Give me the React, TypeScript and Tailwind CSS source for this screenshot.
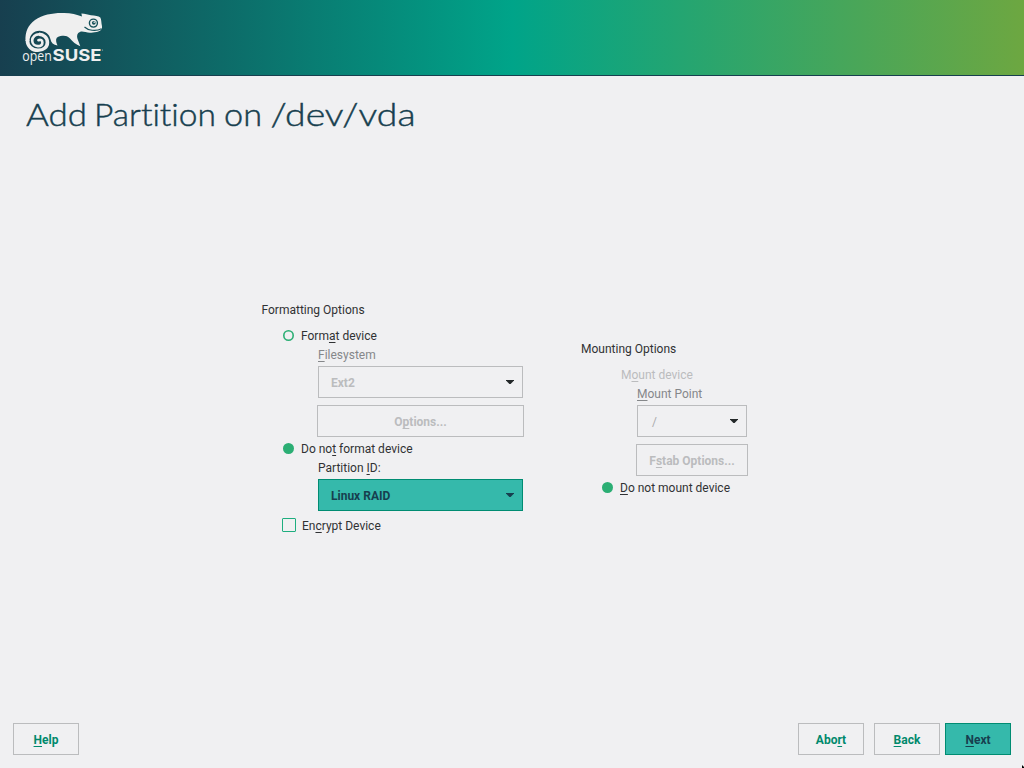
import React from "react";

type MnemonicProps = { text: string; at: number };

function Mnemonic({ text, at }: MnemonicProps) {
  return (
    <span className="whitespace-pre">
      {text.slice(0, at)}
      <span className="underline decoration-1 underline-offset-[2px] [text-decoration-skip-ink:none]">{text[at]}</span>
      {text.slice(at + 1)}
    </span>
  );
}

function Arrow({ color = "#232829" }: { color?: string }) {
  return (
    <svg width="8" height="4" viewBox="0 0 8 4" className="block">
      <path d="M0 0H8V.5L4.6 4H3.4L0 .5Z" fill={color} />
    </svg>
  );
}

function Radio({ checked }: { checked: boolean }) {
  return (
    <svg width="12" height="12" viewBox="0 0 12 12" className="block">
      {checked ? (
        <circle cx="5.5" cy="5.5" r="5.5" fill="#2bae74" />
      ) : (
        <circle cx="5.5" cy="5.5" r="4.7" fill="none" stroke="#2bae74" strokeWidth="1.6" />
      )}
    </svg>
  );
}

function Logo() {
  return (
    <svg width="110" height="75" viewBox="10 0 110 75" className="block">
      <path
        fill="#efefef"
        d="M25.5 41C25 32 28 25 35 20C43 14.5 54 12.7 64 13.1C71 13.3 77 14.7 82 16.5L81.4 13.6C85 13.9 88 15 91 15.3C95 15.7 98.5 16 100.3 17.6C101.5 19.5 101.2 23 102 26.3C102.4 29.5 100 31.6 96.5 32C92 32.6 89 33.2 85.5 32C82 31 80 31.2 78.2 33C76.4 35 77 38 78.3 41C79 43 79.8 44.6 80.3 46.2C76 44.8 72.5 41.8 70 38.6C67 35 63.5 35.5 60.5 36C57 36.7 55.6 38.4 56.2 41.5C56.4 43 57 44 57.5 45.5C53.4 45 51 42.5 50.4 39C49.5 34.5 45.5 30.7 39.5 30.7C33.5 30.7 29.5 35 29.5 41Z"
      />
      <path
        fill="none"
        stroke="#efefef"
        strokeWidth="3.6"
        d="M27.4 40C27.4 46.5 32.2 50.3 38 50.3C43.8 50.3 47.4 46.8 47.4 42.4C47.4 37.5 43.4 34.3 39 34.3"
      />
      <path
        fill="none"
        stroke="#efefef"
        strokeWidth="2.6"
        strokeLinecap="round"
        d="M40 34.4C35.2 33.8 32.2 37.1 32.2 40.6C32.2 44 34.8 46.1 37.9 46.1C40.8 46.1 42.4 44.4 42.4 42.4C42.4 40.4 40.7 39.2 38.4 40.2"
      />
      <circle cx="93.4" cy="23.1" r="4" fill="#efefef" stroke="#145059" strokeWidth="1.4" />
      <circle cx="93.8" cy="22.8" r="1.9" fill="#145059" />
      <ellipse cx="94.4" cy="22.2" rx="1" ry=".6" fill="#efefef" />
      <path d="M84.5 27C88 30.4 95.5 31.7 101.5 28.8" fill="none" stroke="#145059" strokeWidth="1.1" />
      <text fill="#efefef" className="font-['Open_Sans',sans-serif]">
        <tspan x="22.3" y="61" className="text-[14px]" textLength="29.5" lengthAdjust="spacingAndGlyphs">open</tspan>
        <tspan x="52.6" y="61" className="font-['Inter',sans-serif] text-[15.5px] font-bold" textLength="49" lengthAdjust="spacingAndGlyphs">SUSE</tspan>
      </text>
      <circle cx="102.5" cy="50" r=".6" fill="#9ebcbd" />
    </svg>
  );
}

function FooterButton({ label, at, primary = false }: { label: string; at: number; primary?: boolean }) {
  return (
    <button
      className={
        primary
          ? "h-8 w-[66px] border border-[#008c72] bg-[#35b9ab] pt-px font-bold text-[#173f4f]"
          : "h-8 w-[66px] border border-[#bbbcbe] pt-px font-bold text-[#00896c]"
      }
    >
      <Mnemonic text={label} at={at} />
    </button>
  );
}

export default function App() {
  return (
    <div className="relative flex h-[768px] w-[1024px] flex-col overflow-hidden bg-[#f0f0f2] font-[Roboto,sans-serif] text-[12px] leading-[14px] text-[#303234]">
      <header className="h-[76px] shrink-0 border-b border-[#173f4f] bg-[linear-gradient(90deg,#173f4f_0%,#00a489_50%,#6da741_100%)] pl-[10px]">
        <Logo />
      </header>

      <h1 className="h-[74px] pl-[26px] pt-4">
        <svg width="392" height="44" viewBox="0 0 392 44" fill="#173f4f" stroke="#173f4f" strokeWidth=".45" className="block font-[Lato,sans-serif] text-[31.5px] font-light [font-variant-ligatures:none]">
          <text x="0" y="34" textLength="61" lengthAdjust="spacingAndGlyphs">Add</text>
          <text x="68" y="34" textLength="122" lengthAdjust="spacingAndGlyphs">Partition</text>
          <text x="198" y="34" textLength="38" lengthAdjust="spacingAndGlyphs">on</text>
          <text x="244.5" y="34" textLength="145" lengthAdjust="spacingAndGlyphs">/dev/vda</text>
        </svg>
      </h1>

      <main className="flex grow items-start pl-[261px] pt-[153px]">
        <section className="w-[320px]">
          <h2 className="pl-[0.5px]">Formatting Options</h2>
          <div className="mt-3 flex h-[14px] items-center gap-[6px] pl-[22px]">
            <Radio checked={false} />
            <Mnemonic text="Format device" at={4} />
          </div>
          <div className="mt-[5px] pl-[57px] text-[#85878a]">
            <Mnemonic text="Filesystem" at={0} />
          </div>
          <div className="ml-[57px] mt-1 flex h-8 w-[205px] items-center justify-between border border-[#bbbcbe] pl-3 pr-2 font-bold text-[#bbbcbe]">
            <span className="pt-px">Ext2</span><Arrow />
          </div>
          <button className="ml-[56px] mt-[7px] block h-8 w-[207px] border border-[#bbbcbe] pt-px font-bold text-[#bbbcbe]">
            <Mnemonic text="Options..." at={1} />
          </button>
          <div className="mt-[5px] flex h-[14px] items-center gap-[6px] pl-[22px]">
            <Radio checked />
            <Mnemonic text="Do not format device" at={5} />
          </div>
          <div className="mt-[5px] pl-[57px]">
            <Mnemonic text="Partition ID:" at={10} />
          </div>
          <div className="ml-[57px] mt-1 flex h-8 w-[205px] items-center justify-between border border-[#008c72] bg-[#35b9ab] pl-3 pr-2 font-bold text-[#173f4f]">
            <span className="pt-px">Linux RAID</span><Arrow color="#173f4f" />
          </div>
          <div className="mt-[7px] flex items-start gap-[6px] pl-[21px]">
            <span className="h-[14px] w-[14px] rounded-[1px] border border-[#1eae7f]" />
            <span className="pt-px"><Mnemonic text="Encrypt Device" at={2} /></span>
          </div>
        </section>

        <section className="w-[180px] pt-[39px]">
          <h2>Mounting Options</h2>
          <div className="mt-3 pl-10 text-[#bbbcbe]">
            <Mnemonic text="Mount device" at={1} />
          </div>
          <div className="mt-[5px] pl-14 text-[#85878a]">
            <Mnemonic text="Mount Point" at={0} />
          </div>
          <div className="ml-14 mt-1 flex h-8 w-[110px] items-center justify-between border border-[#bbbcbe] pl-[14px] pr-2 text-[#aaabad]">
            <span className="pt-px">/</span><Arrow />
          </div>
          <button className="ml-[55px] mt-[7px] block h-8 w-[112px] border border-[#bbbcbe] pt-px font-bold text-[#bbbcbe]">
            <Mnemonic text="Fstab Options..." at={1} />
          </button>
          <div className="mt-[5px] flex h-[14px] items-center gap-[6px] pl-[21px]">
            <Radio checked />
            <Mnemonic text="Do not mount device" at={0} />
          </div>
        </section>
      </main>

      <footer className="mb-[13px] flex h-8 items-center pl-[13px] pr-[13px]">
        <FooterButton label="Help" at={0} />
        <div className="ml-auto flex">
          <FooterButton label="Abort" at={3} />
          <span className="w-[10px]" />
          <FooterButton label="Back" at={0} />
          <span className="w-[5px]" />
          <FooterButton label="Next" at={0} primary />
        </div>
      </footer>

      <svg width="2" height="3" viewBox="0 0 2 3" className="absolute bottom-0 right-0">
        <path d="M0 0L2 2V3H0Z" fill="#000" />
      </svg>
    </div>
  );
}
